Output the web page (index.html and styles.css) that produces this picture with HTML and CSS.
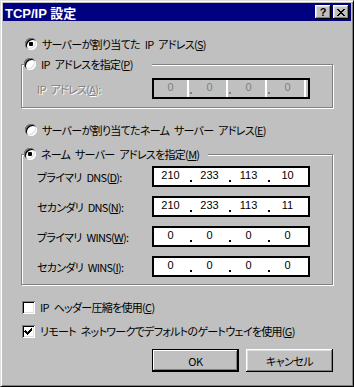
FILE: index.html
```html
<!DOCTYPE html>
<html lang="ja">
<head>
    <meta charset="UTF-8">
    <title>TCP/IP 設定</title>
    <link rel="stylesheet" href="styles.css">
</head>
<body>
    <div class="window">
        <div class="titlebar">
            <span class="title">TCP/IP 設定</span>
            <div class="title-buttons">
                <span class="tbtn help">?</span>
                <span class="tbtn close">
                    <svg width="8" height="7" viewBox="0 0 8 7" shape-rendering="crispEdges">
                        <path d="M0 0h2v1h1v1h2v-1h1v-1h2v1h-1v1h-1v1h-1v1h1v1h1v1h1v1h-2v-1h-1v-1h-2v1h-1v1h-2v-1h1v-1h1v-1h1v-1h-1v-1h-1v-1h-1z" fill="#000"/>
                    </svg>
                </span>
            </div>
        </div>

        <div class="content">
            <div class="option radio-row">
                <span class="radio checked"></span>
                <span>サーバーが割り当てた IP アドレス(<u>S</u>)</span>
            </div>

            <fieldset class="group group-ip">
                <legend class="legend-ip">
                    <span class="radio"></span>
                    <span>IP アドレスを指定(<u>P</u>)</span>
                </legend>
                <div class="field-row">
                    <span class="label disabled">IP アドレス(<u>A</u>):</span>
                    <div class="ip disabled">
                        <span class="seg">0</span><span class="dot"></span>
                        <span class="seg">0</span><span class="dot"></span>
                        <span class="seg">0</span><span class="dot"></span>
                        <span class="seg">0</span>
                    </div>
                </div>
            </fieldset>

            <div class="option radio-row after-group">
                <span class="radio"></span>
                <span>サーバーが割り当てたネーム サーバー アドレス(<u>E</u>)</span>
            </div>

            <fieldset class="group group-dns">
                <legend class="legend-dns">
                    <span class="radio checked"></span>
                    <span>ネーム サーバー アドレスを指定(<u>M</u>)</span>
                </legend>
                <div class="field-row">
                    <span class="label">プライマリ DNS(<u>D</u>):</span>
                    <div class="ip">
                        <span class="seg">210</span><span class="dot"></span>
                        <span class="seg">233</span><span class="dot"></span>
                        <span class="seg">113</span><span class="dot"></span>
                        <span class="seg">10</span>
                    </div>
                </div>
                <div class="field-row">
                    <span class="label">セカンダリ DNS(<u>N</u>):</span>
                    <div class="ip">
                        <span class="seg">210</span><span class="dot"></span>
                        <span class="seg">233</span><span class="dot"></span>
                        <span class="seg">113</span><span class="dot"></span>
                        <span class="seg">11</span>
                    </div>
                </div>
                <div class="field-row">
                    <span class="label">プライマリ WINS(<u>W</u>):</span>
                    <div class="ip">
                        <span class="seg">0</span><span class="dot"></span>
                        <span class="seg">0</span><span class="dot"></span>
                        <span class="seg">0</span><span class="dot"></span>
                        <span class="seg">0</span>
                    </div>
                </div>
                <div class="field-row">
                    <span class="label">セカンダリ WINS(<u>I</u>):</span>
                    <div class="ip">
                        <span class="seg">0</span><span class="dot"></span>
                        <span class="seg">0</span><span class="dot"></span>
                        <span class="seg">0</span><span class="dot"></span>
                        <span class="seg">0</span>
                    </div>
                </div>
            </fieldset>

            <div class="option check-row after-group">
                <span class="checkbox"></span>
                <span>IP ヘッダー圧縮を使用(<u>C</u>)</span>
            </div>
            <div class="option check-row second">
                <span class="checkbox">
                    <svg width="13" height="13" viewBox="0 0 13 13" shape-rendering="crispEdges">
                        <path d="M3 5h1v1h1v1h1v-1h1v-1h1v-1h1v-1h1v3h-1v1h-1v1h-1v1h-1v1h-1v-1h-1v-1h-1v-1h-1z" fill="#000"/>
                    </svg>
                </span>
                <span>リモート ネットワークでデフォルトのゲートウェイを使用(<u>G</u>)</span>
            </div>

            <div class="buttons">
                <button class="btn default">OK</button>
                <button class="btn">キャンセル</button>
            </div>
        </div>
    </div>
</body>
</html>
```

FILE: styles.css
```css
* {
    box-sizing: border-box;
}
body {
    margin: 0;
    font-family: "Noto Sans CJK JP", sans-serif;
    font-size: 11px;
    letter-spacing: -0.7px;
    word-spacing: 3px;
    font-feature-settings: "palt";
    color: #000;
    background: #c0c0c0;
}
.window {
    width: 354px;
    height: 387px;
    background: #c0c0c0;
    border: 1px solid;
    border-color: #dfdfdf #000 #000 #dfdfdf;
    box-shadow: inset 1px 1px #fff, inset -1px -1px #808080;
    padding: 2px;
}
.titlebar {
    height: 18px;
    background: #000080;
    color: #fff;
    display: flex;
    align-items: center;
    justify-content: space-between;
    padding: 0 2px;
    letter-spacing: 0;
    word-spacing: 0;
}
.title {
    font-family: "Liberation Sans", "Noto Sans CJK JP", sans-serif;
    font-weight: bold;
    font-size: 13px;
}
.title-buttons {
    display: flex;
    gap: 2px;
}
.tbtn {
    width: 16px;
    height: 14px;
    background: #c0c0c0;
    color: #000;
    display: flex;
    align-items: center;
    justify-content: center;
    box-shadow: inset -1px -1px #000, inset 1px 1px #fff, inset -2px -2px #808080, inset 2px 2px #dfdfdf;
}
.tbtn.help {
    font-family: "Liberation Sans", sans-serif;
    font-weight: bold;
    font-size: 11px;
    line-height: 14px;
}
.content {
    padding: 15px 18px 0;
}
.option {
    display: flex;
    align-items: center;
    height: 16px;
    gap: 5px;
    white-space: nowrap;
}
.radio-row {
    margin-left: 4px;
}
.after-group {
    margin-top: 14px;
}
.radio {
    position: relative;
    flex: none;
    width: 12px;
    height: 12px;
    border-radius: 50%;
    background: #fff;
    box-shadow: inset 1px 1px #808080, inset -1px -1px #fff, inset 2px 2px #000, inset -2px -2px #dfdfdf;
}
.radio.checked::after {
    content: "";
    position: absolute;
    left: 4px;
    top: 4px;
    width: 4px;
    height: 4px;
    border-radius: 1px;
    background: #000;
}
.group {
    margin: 4px 0 0;
    padding: 6px 0 8px;
    border: 1px solid #808080;
    box-shadow: 1px 1px 0 #fff, inset 1px 1px 0 #fff;
    min-width: 0;
}
.group-dns {
    margin-top: 8px;
    padding-top: 4px;
    padding-bottom: 7px;
}
.group legend {
    display: flex;
    align-items: center;
    gap: 5px;
    height: 16px;
    margin-left: 2px;
    padding: 0;
    background: #c0c0c0;
    white-space: nowrap;
}
.legend-ip {
    width: 128px;
}
.legend-dns {
    width: 184px;
}
.field-row {
    display: flex;
    align-items: center;
    height: 21px;
    padding-left: 15px;
}
.field-row + .field-row {
    margin-top: 9px;
}
.label {
    width: 115px;
    white-space: nowrap;
}
.disabled {
    color: #808080;
    text-shadow: 1px 1px 0 #fff;
}
.ip {
    display: flex;
    width: 158px;
    height: 21px;
    border: 2px solid #000;
    background: #fff;
    font-family: "Liberation Sans", sans-serif;
    font-size: 11px;
    letter-spacing: 0;
    word-spacing: 0;
    text-shadow: none;
}
.ip .seg {
    width: 35px;
    border-right: 2px solid #fff;
    text-align: center;
    line-height: 13px;
    padding-top: 1px;
}
.ip .dot {
    width: 4px;
    display: flex;
    align-items: flex-end;
    justify-content: center;
    padding-bottom: 3px;
}
.ip .dot::before {
    content: "";
    width: 2px;
    height: 2px;
    background: #000;
}
.ip.disabled {
    background: #c0c0c0;
}
.ip.disabled .seg {
    color: #808080;
}
.ip.disabled .dot::before {
    background: #808080;
}
.check-row {
    margin-left: 1px;
}
.check-row.second {
    margin-top: 8px;
}
.checkbox {
    flex: none;
    width: 13px;
    height: 13px;
    background: #fff;
    box-shadow: inset 1px 1px #808080, inset -1px -1px #fff, inset 2px 2px #000, inset -2px -2px #dfdfdf;
}
.checkbox svg {
    display: block;
}
.buttons {
    display: flex;
    justify-content: flex-end;
    gap: 7px;
    margin-top: 10px;
}
.btn {
    width: 87px;
    height: 23px;
    padding: 0;
    border: none;
    background: #c0c0c0;
    font-family: "Noto Sans CJK JP", sans-serif;
    font-size: 11px;
    letter-spacing: -0.5px;
    font-feature-settings: "palt";
    color: #000;
    box-shadow: inset -1px -1px #000, inset 1px 1px #fff, inset -2px -2px #808080, inset 2px 2px #dfdfdf;
}
.btn.default {
    border: 1px solid #000;
    box-shadow: inset -1px -1px #000, inset 1px 1px #fff, inset -2px -2px #808080;
}
```
